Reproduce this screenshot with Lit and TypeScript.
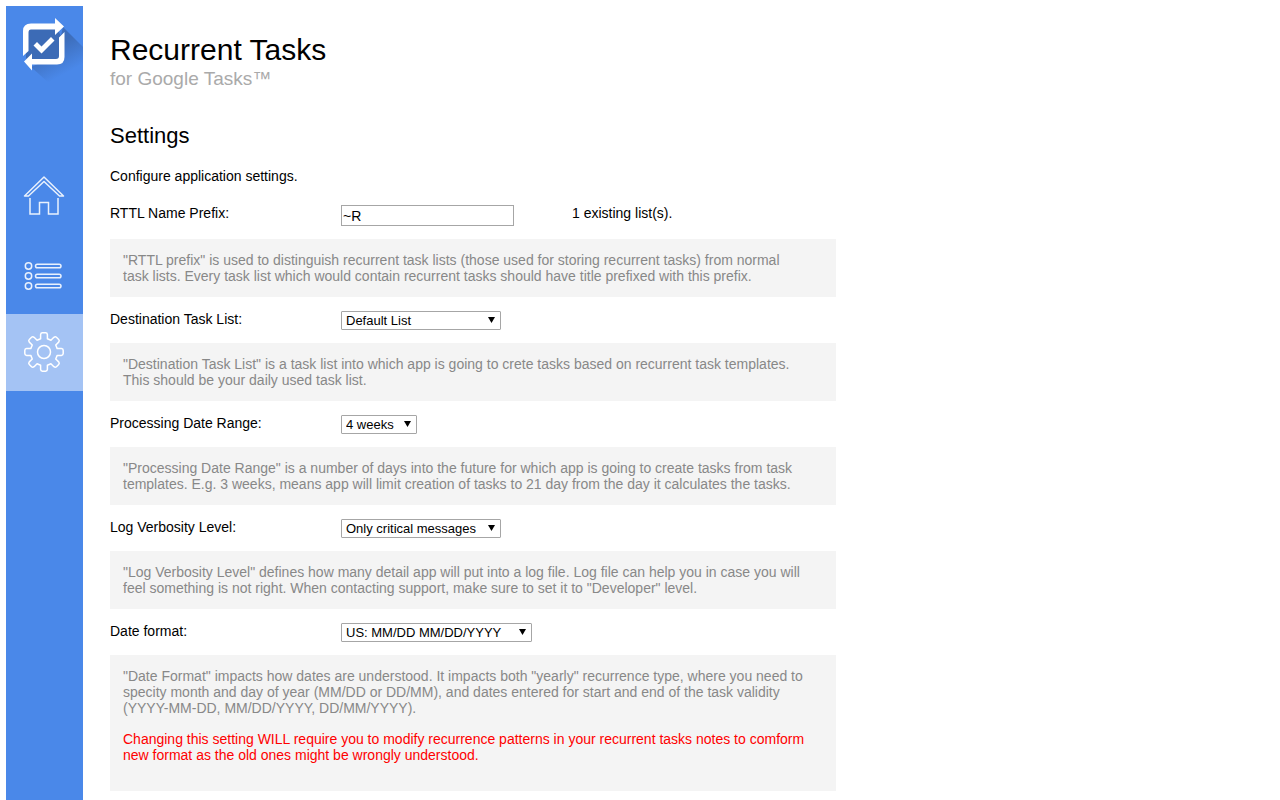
import { LitElement, html, css, svg, nothing } from "lit";
import { customElement, property } from "lit/decorators.js";

type Setting = {
  id: string;
  label: string;
  size: "small" | "medium" | "large";
  options: string[];
  help: string;
  warning?: string;
};

const PREFIX_HELP = `"RTTL prefix" is used to distinguish recurrent task lists (those used for storing recurrent tasks) from normal
task lists. Every task list which would contain recurrent tasks should have title prefixed with this prefix.`;

const SETTINGS: Setting[] = [
  {
    id: "destination",
    label: "Destination Task List:",
    size: "medium",
    options: ["Default List"],
    help: `"Destination Task List" is a task list into which app is going to crete tasks based on recurrent task templates.
This should be your daily used task list.`,
  },
  {
    id: "range",
    label: "Processing Date Range:",
    size: "small",
    options: ["4 weeks", "1 week", "2 weeks", "3 weeks"],
    help: `"Processing Date Range" is a number of days into the future for which app is going to create tasks from task
templates. E.g. 3 weeks, means app will limit creation of tasks to 21 day from the day it calculates the tasks.`,
  },
  {
    id: "verbosity",
    label: "Log Verbosity Level:",
    size: "medium",
    options: ["Only critical messages", "Developer"],
    help: `"Log Verbosity Level" defines how many detail app will put into a log file. Log file can help you in case you will
feel something is not right. When contacting support, make sure to set it to "Developer" level.`,
  },
  {
    id: "format",
    label: "Date format:",
    size: "large",
    options: ["US: MM/DD MM/DD/YYYY"],
    help: `"Date Format" impacts how dates are understood. It impacts both "yearly" recurrence type, where you need to
specity month and day of year (MM/DD or DD/MM), and dates entered for start and end of the task validity
(YYYY-MM-DD, MM/DD/YYYY, DD/MM/YYYY).`,
    warning: `Changing this setting WILL require you to modify recurrence patterns in your recurrent tasks notes to comform
new format as the old ones might be wrongly understood.`,
  },
];

// One tooth of the gear, repeated every 45 degrees around the centre.
const gearPath = (() => {
  const parts: string[] = [];
  const point = (x: number, y: number, turn: number) => {
    const a = (turn * Math.PI) / 180;
    return `${(38 + x * Math.cos(a) - y * Math.sin(a)).toFixed(2)} ${(38 + x * Math.sin(a) + y * Math.cos(a)).toFixed(2)}`;
  };
  for (let turn = 0; turn < 360; turn += 45) {
    parts.push(
      `${turn ? "L" : "M"}${point(-3.4, -13.2, turn)}`,
      `L${point(-3.4, -17.4, turn)}`,
      `Q${point(-3.2, -19.2, turn)} ${point(-1.6, -19.2, turn)}`,
      `L${point(1.6, -19.2, turn)}`,
      `Q${point(3.2, -19.2, turn)} ${point(3.4, -17.4, turn)}`,
      `L${point(3.4, -13.2, turn)}`,
    );
  }
  return parts.join(" ") + "Z";
})();

@customElement("side-nav")
class SideNav extends LitElement {
  static styles = css`
    :host {
      display: block;
      width: 77px;
      flex: none;
      background: #4a88e9;
    }
    svg {
      display: block;
      width: 77px;
    }
    .logo {
      height: 77px;
      margin-bottom: 77px;
    }
    .item {
      display: block;
      height: 77px;
    }
    .item svg {
      height: 77px;
      fill: none;
      stroke: #e9f1fd;
      stroke-width: 1.5;
      stroke-linejoin: round;
    }
    .active {
      background: #a4c3f4;
    }
    .active svg {
      stroke: #ffffff;
    }
  `;

  render() {
    return html`
      <svg class="logo" viewBox="0 0 77 77" role="img" aria-label="Recurrent Tasks">
        <defs>
          <linearGradient id="shade" x1="48" y1="40" x2="62" y2="66" gradientUnits="userSpaceOnUse">
            <stop offset="0" stop-color="#3c6bb6" stop-opacity=".9" />
            <stop offset="1" stop-color="#3c6bb6" stop-opacity="0" />
          </linearGradient>
        </defs>
        <path d="M57 21 77 41V77H43L25 61 50 50Z" fill="url(#shade)" />
        <path d="M22 23H51L55 30V58H24L20 52V25Z" fill="#3c6bb6" />
        <g fill="#fff">
          <path d="M17 50V25Q17 17.500 25 17.500H49V12L58 20.500 49 29V23.500H25Q22.500 23.500 22.500 26.500V45Z" />
          <path d="M58.500 26V51Q58.500 58.500 51 58.500H26V64.500L18 55.500 26 47.500V53H50Q53 53 53 50V31.500Z" />
          <path d="M27.500 39.500 31 36 35.500 40.500 45 31 48.500 34.500 35.500 47.500Z" />
        </g>
      </svg>
      <nav>
        <a class="item" href="#home" aria-label="Home">
          <svg viewBox="0 0 77 77">
            <path d="M18.500 36 38 17 57.500 36H53.500L38 21.500 22.500 36Z" />
            <path d="M24 38V54H33.500V42.500H42.500V54H52V38" stroke-linejoin="miter" />
          </svg>
        </a>
        <a class="item" href="#tasks" aria-label="Tasks">
          <svg viewBox="0 0 77 77">
            ${[29, 39, 49].map(
              (y) => svg`<circle cx="22.500" cy=${y} r="3.200" /><rect x="29.500" y=${y - 1.8} width="25.500" height="3.600" rx="1.800" />`,
            )}
          </svg>
        </a>
        <a class="item active" href="#settings" aria-label="Settings" aria-current="page">
          <svg viewBox="0 0 77 77">
            <path d=${gearPath} />
            <circle cx="38" cy="38" r="6.500" />
          </svg>
        </a>
      </nav>
    `;
  }
}

@customElement("setting-row")
class SettingRow extends LitElement {
  @property({ attribute: false }) setting!: Setting;

  static styles = css`
    :host {
      display: block;
      padding-top: 14px;
    }
    .row {
      display: grid;
      grid-template-columns: 231px 1fr;
      margin-bottom: 13px;
    }
    .field {
      position: relative;
      justify-self: start;
      height: 19px;
    }
    select {
      appearance: none;
      display: block;
      box-sizing: border-box;
      height: 19px;
      margin: 0;
      padding: 0 18px 0 4px;
      border: 1px solid #a6a6a6;
      border-radius: 1px;
      background: #fff;
      color: #000;
      font: 13px/17px "Liberation Sans", Arial, sans-serif;
    }
    .small {
      width: 76px;
    }
    .medium {
      width: 160px;
    }
    .large {
      width: 191px;
    }
    .arrow {
      position: absolute;
      right: 6px;
      top: 6px;
      width: 7px;
      height: 6px;
      pointer-events: none;
    }
    .help {
      display: flow-root;
      padding: 13px;
      background: #f4f4f4;
      color: #888;
      white-space: pre-line;
    }
    p {
      margin: 0;
    }
    .warning {
      margin: 15px 0;
      color: #f00;
    }
  `;

  render() {
    const s = this.setting;
    return html`
      <div class="row">
        <label for=${s.id}>${s.label}</label>
        <div class="field">
          <select id=${s.id} class=${s.size}>
            ${s.options.map((o) => html`<option>${o}</option>`)}
          </select>
          <svg class="arrow" viewBox="0 0 7 6" aria-hidden="true"><path d="M0 0H7L3.500 6Z" /></svg>
        </div>
      </div>
      <div class="help"><p>${s.help}</p>${s.warning ? html`<p class="warning">${s.warning}</p>` : nothing}</div>
    `;
  }
}

@customElement("app-root")
class AppRoot extends LitElement {
  static styles = css`
    :host {
      display: flex;
      gap: 27px;
      box-sizing: border-box;
      min-height: 100vh;
      padding: 6px 6px 0;
      background: #fff;
      color: #000;
      font: 14px/16px "Liberation Sans", Arial, sans-serif;
    }
    main {
      flex: 1;
      min-width: 0;
      max-width: 726px;
      padding: 27px 0 9px;
    }
    h1,
    h2,
    p {
      margin: 0;
      font-weight: 400;
    }
    h1 {
      font-size: 30px;
      line-height: 33px;
    }
    .subtitle {
      color: #aaa;
      font-size: 19px;
      line-height: 26px;
    }
    h2 {
      margin-top: 31px;
      font-size: 22px;
      line-height: 26px;
    }
    .intro {
      margin: 19px 0 21px;
    }
    .row {
      display: grid;
      grid-template-columns: 231px 231px 1fr;
      margin-bottom: 13px;
    }
    .row > div {
      display: flex;
    }
    input {
      box-sizing: border-box;
      width: 173px;
      height: 21px;
      padding: 1px;
      border: 1px solid #a6a6a6;
      background: #fff;
      color: #000;
      font: 14px/17px "Liberation Sans", Arial, sans-serif;
    }
    .help {
      padding: 13px;
      background: #f4f4f4;
      color: #888;
      white-space: pre-line;
    }
  `;

  render() {
    return html`
      <side-nav></side-nav>
      <main>
        <h1>Recurrent Tasks</h1>
        <p class="subtitle">for Google Tasks™</p>
        <h2>Settings</h2>
        <p class="intro">Configure application settings.</p>
        <div class="row">
          <label for="prefix">RTTL Name Prefix:</label>
          <div><input id="prefix" type="text" value="~R" /></div>
          <span>1 existing list(s).</span>
        </div>
        <p class="help">${PREFIX_HELP}</p>
        ${SETTINGS.map((s) => html`<setting-row .setting=${s}></setting-row>`)}
      </main>
    `;
  }
}
